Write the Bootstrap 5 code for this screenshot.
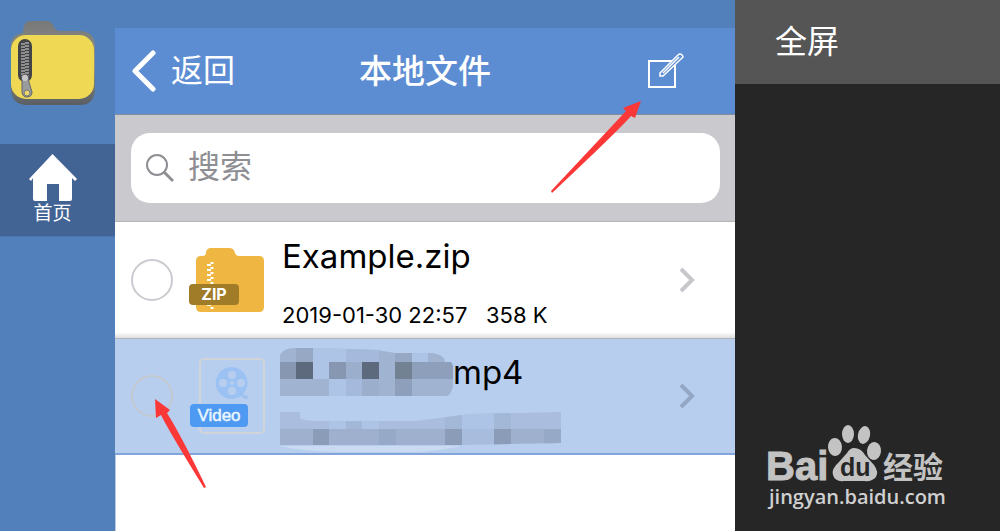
<!DOCTYPE html>
<html lang="zh-CN">
<head>
<meta charset="utf-8">
<meta name="viewport" content="width=device-width, initial-scale=1">
<title>本地文件</title>
<link href="https://cdn.jsdelivr.net/npm/bootstrap@5.3.0/dist/css/bootstrap.min.css" rel="stylesheet">
<style>
body{font-family:Inter,"Noto Sans CJK SC",sans-serif;background:#262626;color:#000;overflow-x:hidden}
svg{display:block;flex-shrink:0}
.side-nav{flex:0 0 115px;background:#5180bb}
.app-logo{padding:20px 0 0 10px;height:144px}
.home-link{height:93px;background:#426495;color:#fff;font-size:19px;line-height:26px;padding:10px 10px 0 0;border-bottom:1px solid #4b78b4}
.files{flex:1 1 0;min-width:0;background:#fff;box-shadow:inset 1px 0 #b8cbe6}
.status-strip{height:28px;background:#5180bb}
.title-bar{height:87px;background:#5c8dd3;color:#fff;border-bottom:1px solid #868d99;display:grid;grid-template-columns:1fr auto 1fr}
.bar-btn{color:#fff;font-size:32px;line-height:40px}
.bar-title{font-size:33px;line-height:40px;font-weight:500}
.search-area{background:#cac9ce;padding:18px 15px 18px 16px;border-bottom:1px solid #b5b4b8}
.search-box{background:#fff;border-radius:19px;height:70px;padding:0 15px}
.search-box input{font-size:32px;line-height:40px;height:48px;padding:0 0 4px;margin-left:14px;box-shadow:none!important}
.search-box input::placeholder{color:#8e8e93;opacity:1}
.file-row{height:116px;padding:0 40px 0 16px}
.file-row + .file-row{background:#b8ceee;height:117px;border-top:1px solid #b0b3b7;border-bottom:2px solid #83a6da}
.first-row{background:linear-gradient(#fff 110px,#dedede)}
.pick{flex:0 0 42px;width:42px;height:42px;margin:0;border:2px solid #cbcad1;background-color:transparent}
.pick-faint{border-color:#c4c8cf}
.file-icon{margin-left:16px}
.file-text{margin-left:16px;padding-top:3px}
.clip-text{margin-left:14px;padding-top:8px}
.file-name{font-size:33px;line-height:44px}
.file-meta{font-size:22px;line-height:28px;margin-top:23px;white-space:pre}
.pointer-up{right:93px;top:73px}
.pointer-down{left:39px;top:60px;z-index:2}
.full-pane{flex:0 0 265px;background:#262626}
.full-btn{height:84px;background:#555;color:#fff;font-size:32px;line-height:40px;padding:0 40px;text-align:left}
.brand-mark{padding:0 50px 18px 28px}
</style>
</head>
<body>
<div class="d-flex min-vh-100">
  <nav class="side-nav" aria-label="主导航">
    <div class="app-logo">
      <svg width="86" height="86" viewBox="0 0 86 86" aria-hidden="true">
        <defs><linearGradient id="fold" x2="0" y2="1"><stop stop-color="#777879"/><stop offset=".5" stop-color="#929486"/><stop offset="1" stop-color="#595e63"/></linearGradient></defs>
        <path d="M1 26Q1 14 13 13Q13 1 20 1H37Q42 1 44 7Q46 11 50 11H71Q85 12 85 27V70Q84 85 70 85H16Q2 84 1 70Z" fill="url(#fold)"/>
        <rect x="1" y="15" width="83" height="64" rx="15" fill="#efd954"/>
        <rect x="8" y="19" width="14" height="43" rx="7" fill="#424447"/>
        <path d="M13 23V57M17 22V56" stroke="#8e8e8e" stroke-width="4" stroke-dasharray="2 1"/>
        <path d="M12 56q3-4 6 0l1 6 3 10q0 5-5 5t-5-6z" fill="#999b9c" stroke="#626467"/>
        <circle cx="17" cy="73" r="3" fill="#e8d66a" stroke="#777"/><circle cx="15" cy="58" r="3" fill="#c8c8c8"/>
      </svg>
    </div>
    <a href="#" class="home-link d-flex flex-column align-items-center text-decoration-none">
      <svg width="48" height="47" viewBox="0 0 48 47" aria-hidden="true"><path d="M23.500 0 48 25 46 27 43 24V45Q43 47 41 47H30V30H18V47H6Q4 47 4 45V24L2 27 0 25Z" fill="#fff"/></svg>
      <span>首页</span>
    </a>
  </nav>

  <main class="files">
    <div class="status-strip"></div>
    <div class="position-relative">
    <header class="title-bar align-items-center">
      <button type="button" class="bar-btn btn border-0 p-0 d-flex align-items-center justify-content-start ps-3">
        <svg width="28" height="42" viewBox="0 0 28 42" class="me-2" aria-hidden="true"><path d="M22 3 4 21 22 39" fill="none" stroke="#fff" stroke-width="5" stroke-linecap="round" stroke-linejoin="round"/></svg><span class="ms-1 ps-0">返回</span>
      </button>
      <h1 class="bar-title m-0">本地文件</h1>
      <button type="button" class="btn border-0 p-0 ms-auto me-5" aria-label="编辑">
        <svg width="40" height="36" viewBox="0 0 40 36" aria-hidden="true"><g fill="none" stroke="#fff"><path d="M25 8H2V34H28V12" stroke-width="2"/><path d="M13 20 31 2Q33 0 35 2T35 5L16 23 13 23ZM16 20 32 4" stroke-width="1.500"/></g></svg>
      </button>
    </header>
    <div class="search-area">
      <label class="search-box d-flex align-items-center">
        <svg width="28" height="30" viewBox="0 0 28 30" aria-hidden="true"><g fill="none" stroke="#8e8e93" stroke-width="2"><circle cx="11" cy="12" r="10"/><path d="M18 19 27 28" stroke-width="3"/></g></svg>
        <input type="search" class="form-control border-0 bg-transparent" placeholder="搜索" aria-label="搜索">
      </label>
    </div>
    <svg class="pointer-up position-absolute" width="91" height="92" viewBox="0 0 91 92" aria-hidden="true"><path d="M90 0 84 17 80 15Q70 27 1 92L0 90Q61 25 75 10L72 7Z" fill="#fb3838"/></svg>
    </div>

    <div class="file-row first-row d-flex align-items-center">
      <input class="form-check-input pick rounded-circle" type="checkbox" aria-label="选择 Example.zip">
      <svg class="file-icon" width="77" height="66" viewBox="0 0 77 66" aria-hidden="true">
        <path d="M7 14Q7 9 12 9H14Q17 9 17 5Q18 1 22 1H40Q45 1 46 6Q47 9 50 9H70Q75 9 75 14V60Q75 65 70 65H12Q7 65 7 60Z" fill="#efb742"/>
        <path d="M20 17V62" stroke="#fff" stroke-width="4" stroke-dasharray="2 3"/><path d="M23 15V62" stroke="#fff" stroke-width="3" stroke-dasharray="2 3"/>
        <rect y="37" width="50" height="21" rx="4" fill="#a07b28"/>
        <text x="25" y="53" text-anchor="middle" font-family="Inter" font-size="16" font-weight="700" fill="#fff">ZIP</text>
      </svg>
      <div class="file-text flex-grow-1">
        <div class="file-name">Example.zip</div>
        <div class="file-meta">2019-01-30 22:57   358 K</div>
      </div>
      <svg width="16" height="26" viewBox="0 0 16 26" aria-hidden="true"><path d="M2 2 13 13 2 24" fill="none" stroke="#c7c7cc" stroke-width="4"/></svg>
    </div>

    <div class="file-row d-flex align-items-center position-relative">
      <input class="form-check-input pick pick-faint rounded-circle" type="checkbox" aria-label="选择视频">
      <svg class="file-icon" width="77" height="78" viewBox="0 0 77 78" aria-hidden="true">
        <rect x="11" y="2" width="64" height="74" rx="4" fill="none" stroke="#d1d4d8" stroke-width="2"/>
        <path d="M43 10A16 16 0 1 0 52 39Q54 42 59 42L58 38Q55 39 54 37A16 16 0 0 0 43 10" fill="#9bc2f2"/>
        <g fill="#b8ceee"><circle cx="43" cy="18" r="4"/><circle cx="34" cy="26" r="4"/><circle cx="52" cy="26" r="4"/><circle cx="43" cy="34" r="4"/><circle cx="43" cy="26" r="2"/></g>
        <rect x="1" y="47" width="58" height="23" rx="4" fill="#4e99f1"/>
        <text x="30" y="64" text-anchor="middle" font-family="Liberation Sans" font-size="17" font-weight="400" stroke="#eaf6ff" stroke-width=".5" fill="#eaf6ff">Video</text>
      </svg>
      <div class="clip-text flex-grow-1">
        <div class="file-name d-flex align-items-center">
          <svg width="173" height="48" viewBox="0 0 173 48" aria-hidden="true">
            <defs><clipPath id="nameclip"><path d="M0 7Q4 0 14 0H35L97 2 115 5 152 5Q165 7 165 14H171L173 18V38Q171 48 166 48H0Z"/></clipPath></defs>
            <g clip-path="url(#nameclip)">
              <path fill="#a0b3d0" d="M0 0h173v48H0z"/>
              <path fill="#97a8c4" d="M16 0h17v14H16zM115 0h17v14h-17z"/>
              <path fill="#adc4e6" d="M33 0h16v31H33zM49 0h17v14H49zM49 31h17v17H49zM132 0h16v14h-16z"/>
              <path fill="#8797b1" d="M0 14h16v17H0zM49 14h17v17H49z"/>
              <path fill="#5d697d" d="M16 14h17v17H16zM82 14h17v17H82z"/>
              <path fill="#728293" d="M115 14h17v17h-17z"/>
              <path fill="#8d9fbb" d="M132 14h41v17h-41zM115 31h17v17h-17z"/>
              <path fill="#9bafcc" d="M66 14h16v17H66zM82 31h17v17H82z"/>
              <path fill="#a5b9dc" d="M66 0h33v14H66zM66 31h16v17H66z"/>
            </g>
          </svg>mp4
        </div>
        <svg class="mt-3" width="281" height="40" viewBox="0 0 281 40" aria-hidden="true">
          <path d="M0 34Q26 40 66 40H133Q151 40 182 34Z" fill="#c9daf2"/>
          <defs><clipPath id="metaclip"><path d="M0 0H20V6Q24 9 38 9H136L190 2 281 0V31L182 33H0Z"/></clipPath></defs>
          <g clip-path="url(#metaclip)">
            <path fill="#aabddf" d="M0 0h281v17H0z"/>
            <path fill="#a3b7d6" d="M66 0h16v17H66zM165 0h17v17h-17zM214 0h17v17h-17z"/>
            <path fill="#9eb0ce" d="M0 17h182v16H0zM214 17h67v16h-67z"/>
            <path fill="#8b9cb8" d="M33 17h16v16H33zM214 17h17v16h-17zM165 17h17v16h-17z"/>
            <path fill="#96a9c7" d="M99 17h17v16H99zM264 17h17v16h-17z"/>
            <path fill="#a8bddd" d="M182 17h32v16h-32z"/>
            <path fill="#aec4e7" d="M49 0h17v17H49zM82 0h17v17H82zM182 0h32v17h-32z"/>
          </g>
        </svg>
      </div>
      <svg width="16" height="26" viewBox="0 0 16 26" aria-hidden="true"><path d="M2 2 13 13 2 24" fill="none" stroke="#93a6c3" stroke-width="4"/></svg>
      <svg class="pointer-down position-absolute" width="52" height="89" viewBox="0 0 52 89" aria-hidden="true"><path d="M1 0 16 11 13 14Q28 38 52 88L50 89Q16 34 7 16L2 19Z" fill="#fb3838"/></svg>
    </div>
  </main>

  <aside class="full-pane d-flex flex-column justify-content-between">
    <button type="button" class="full-btn btn border-0 rounded-0 w-100">全屏</button>
    <div class="brand-mark">
      <svg width="187" height="88" viewBox="0 0 187 88" role="img" aria-label="Baidu 经验">
        <g fill="#c3c3c3">
          <text x="3" y="55" font-family="Liberation Sans" font-size="40" font-weight="700" stroke="#c3c3c3">Bai</text>
          <ellipse cx="72" cy="22" rx="7" ry="9" transform="rotate(-4 72 22)"/>
          <ellipse cx="85" cy="9" rx="6" ry="9"/><ellipse cx="101" cy="10" rx="6" ry="9" transform="rotate(12 101 10)"/>
          <ellipse cx="111" cy="26" rx="7" ry="9" transform="rotate(5 111 26)"/>
          <path d="M91 23Q98 23 102 30L111 40Q116 47 113 52Q109 57 101 56H81Q72 57 70 50Q68 44 76 37L84 28Q87 23 91 23Z"/>
          <text x="120" y="53" font-family="Noto Sans CJK SC" font-size="30" font-weight="700">经验</text>
          <text x="6" y="79" font-family="Open Sans" font-size="20" font-weight="600" fill="#d0d0d0">jingyan.baidu.com</text>
        </g>
        <text x="77" y="51" font-family="Liberation Sans" font-size="25" font-weight="700" fill="#262626">du</text>
      </svg>
    </div>
  </aside>
</div>
<script src="https://cdn.jsdelivr.net/npm/bootstrap@5.3.0/dist/js/bootstrap.bundle.min.js"></script>
</body>
</html>
